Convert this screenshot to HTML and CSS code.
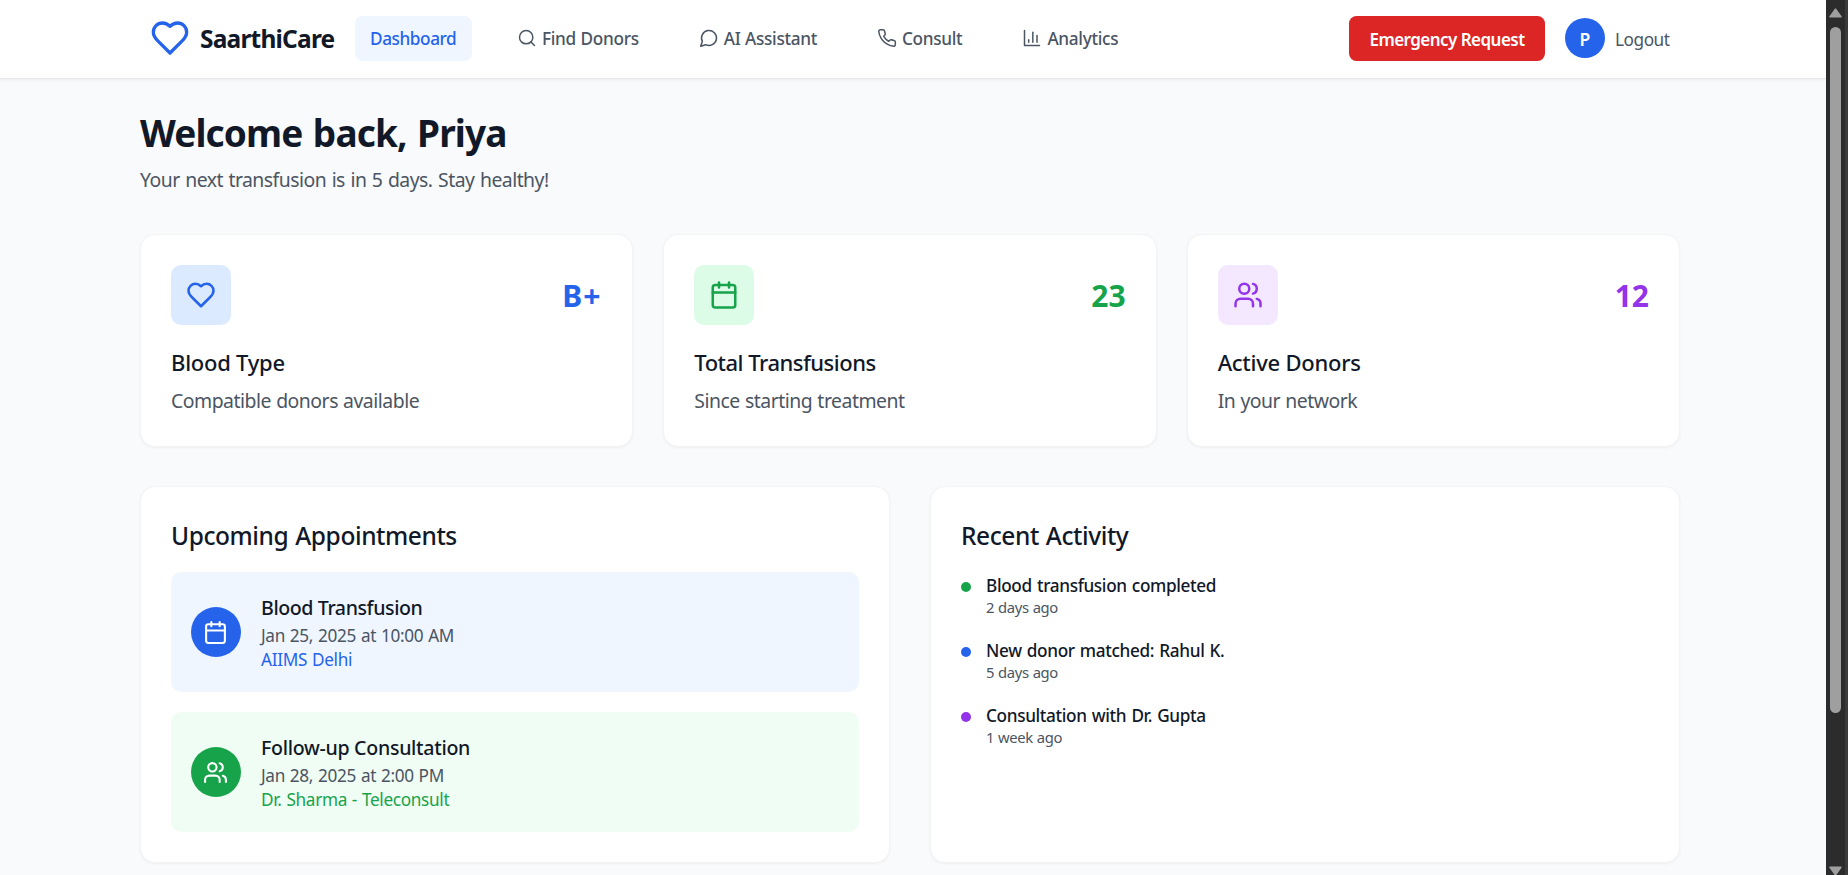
FILE: index.html
```
<!DOCTYPE html>
<html lang="en">
  <head>
    <meta charset="UTF-8" />
    <meta name="viewport" content="width=device-width, initial-scale=1.0" />
    <title>SaarthiCare | Dashboard</title>
    <link rel="stylesheet" href="styles.css" />
  </head>

  <body>
    <!-- shared icon shapes -->
    <svg class="icon-defs" aria-hidden="true">
      <symbol id="heart" viewBox="0 0 24 24">
        <path d="M19 14c1.49-1.46 3-3.21 3-5.5A5.5 5.5 0 0 0 16.5 3c-1.76 0-3 .5-4.5 2-1.5-1.5-2.74-2-4.5-2A5.5 5.5 0 0 0 2 8.5c0 2.3 1.5 4.05 3 5.5l7 7Z" />
      </symbol>
      <symbol id="search" viewBox="0 0 24 24">
        <circle cx="11" cy="11" r="8" />
        <path d="m21 21-4.3-4.3" />
      </symbol>
      <symbol id="message" viewBox="0 0 24 24">
        <path d="M7.9 20A9 9 0 1 0 4 16.1L2 22Z" />
      </symbol>
      <symbol id="phone" viewBox="0 0 24 24">
        <path d="M22 16.92v3a2 2 0 0 1-2.18 2 19.79 19.79 0 0 1-8.63-3.07 19.5 19.5 0 0 1-6-6 19.79 19.79 0 0 1-3.07-8.67A2 2 0 0 1 4.11 2h3a2 2 0 0 1 2 1.72 12.84 12.84 0 0 0 .7 2.81 2 2 0 0 1-.45 2.11L8.09 9.91a16 16 0 0 0 6 6l1.27-1.27a2 2 0 0 1 2.11-.45 12.84 12.84 0 0 0 2.81.7A2 2 0 0 1 22 16.92z" />
      </symbol>
      <symbol id="chart" viewBox="0 0 24 24">
        <path d="M3 3v18h18" />
        <path d="M18 17V9" />
        <path d="M13 17V5" />
        <path d="M8 17v-3" />
      </symbol>
      <symbol id="calendar" viewBox="0 0 24 24">
        <path d="M8 2v4" />
        <path d="M16 2v4" />
        <rect width="18" height="18" x="3" y="4" rx="2" />
        <path d="M3 10h18" />
      </symbol>
      <symbol id="users" viewBox="0 0 24 24">
        <path d="M16 21v-2a4 4 0 0 0-4-4H6a4 4 0 0 0-4 4v2" />
        <circle cx="9" cy="7" r="4" />
        <path d="M22 21v-2a4 4 0 0 0-3-3.87" />
        <path d="M16 3.13a4 4 0 0 1 0 7.75" />
      </symbol>
    </svg>

    <div class="page">
      <header class="header">
        <div class="header-inner">
          <div class="logo">
            <svg class="icon logo-icon"><use href="#heart" /></svg>
            <span>SaarthiCare</span>
          </div>
          <nav class="nav">
            <a class="nav-link active" href="#">Dashboard</a>
            <a class="nav-link" href="#"><svg class="icon"><use href="#search" /></svg><span>Find Donors</span></a>
            <a class="nav-link" href="#"><svg class="icon"><use href="#message" /></svg><span>AI Assistant</span></a>
            <a class="nav-link" href="#"><svg class="icon"><use href="#phone" /></svg><span>Consult</span></a>
            <a class="nav-link" href="#"><svg class="icon"><use href="#chart" /></svg><span>Analytics</span></a>
          </nav>
          <div class="header-actions">
            <button class="emergency" type="button">Emergency Request</button>
            <div class="user">
              <div class="avatar">P</div>
              <a class="logout" href="#">Logout</a>
            </div>
          </div>
        </div>
      </header>

      <main class="main">
        <h1>Welcome back, Priya</h1>
        <p class="subtitle">Your next transfusion is in 5 days. Stay healthy!</p>

        <section class="stats">
          <div class="card blue">
            <div class="stat-top">
              <div class="stat-icon"><svg class="icon"><use href="#heart" /></svg></div>
              <span class="stat-value">B+</span>
            </div>
            <h3>Blood Type</h3>
            <p>Compatible donors available</p>
          </div>
          <div class="card green">
            <div class="stat-top">
              <div class="stat-icon"><svg class="icon"><use href="#calendar" /></svg></div>
              <span class="stat-value">23</span>
            </div>
            <h3>Total Transfusions</h3>
            <p>Since starting treatment</p>
          </div>
          <div class="card purple">
            <div class="stat-top">
              <div class="stat-icon"><svg class="icon"><use href="#users" /></svg></div>
              <span class="stat-value">12</span>
            </div>
            <h3>Active Donors</h3>
            <p>In your network</p>
          </div>
        </section>

        <section class="panels">
          <div class="card">
            <h2>Upcoming Appointments</h2>
            <div class="appointments">
              <div class="appointment blue">
                <div class="appointment-icon"><svg class="icon"><use href="#calendar" /></svg></div>
                <div>
                  <h4>Blood Transfusion</h4>
                  <p class="date">Jan 25, 2025 at 10:00 AM</p>
                  <p class="place">AIIMS Delhi</p>
                </div>
              </div>
              <div class="appointment green">
                <div class="appointment-icon"><svg class="icon"><use href="#users" /></svg></div>
                <div>
                  <h4>Follow-up Consultation</h4>
                  <p class="date">Jan 28, 2025 at 2:00 PM</p>
                  <p class="place">Dr. Sharma - Teleconsult</p>
                </div>
              </div>
            </div>
          </div>
          <div class="card">
            <h2>Recent Activity</h2>
            <ul class="activity">
              <li class="green">
                <p class="event">Blood transfusion completed</p>
                <p class="time">2 days ago</p>
              </li>
              <li class="blue">
                <p class="event">New donor matched: Rahul K.</p>
                <p class="time">5 days ago</p>
              </li>
              <li class="purple">
                <p class="event">Consultation with Dr. Gupta</p>
                <p class="time">1 week ago</p>
              </li>
            </ul>
          </div>
        </section>
      </main>
    </div>

    <div class="scrollbar">
      <svg class="arrow" viewBox="0 0 12 9"><path d="M6 1 11 8H1Z" /></svg>
      <div class="thumb"></div>
      <svg class="arrow" viewBox="0 0 12 9"><path d="M1 1h10L6 8Z" /></svg>
    </div>
  </body>
</html>
```
FILE: styles.css
```
* {
  padding: 0;
  margin: 0;
  box-sizing: border-box;
}

html {
  font-size: 20px;
}

body {
  display: flex;
  height: 100vh;
  overflow: hidden;
  font-family: "Segoe UI", "Noto Sans", "Open Sans", sans-serif;
  line-height: 1.5;
  color: #111827;
  background-color: #f9fafb;
}

a {
  color: inherit;
  text-decoration: none;
}

.blue {
  --main: #2563eb;
  --soft: #dbeafe;
  --pale: #eff6ff;
}

.green {
  --main: #16a34a;
  --soft: #dcfce7;
  --pale: #f0fdf4;
}

.purple {
  --main: #9333ea;
  --soft: #f3e8ff;
}

.icon-defs {
  display: none;
}

.icon {
  display: block;
  flex-shrink: 0;
  width: 20px;
  height: 20px;
  fill: none;
  stroke: currentColor;
  stroke-width: 2;
  stroke-linecap: round;
  stroke-linejoin: round;
}

.page {
  flex: 1;
  min-width: 0;
}

/* header */

.header {
  height: 79px;
  padding-right: 6px;
  background-color: #ffffff;
  border-bottom: 1px solid #e5e7eb;
  box-shadow: 0 1px 3px rgba(0, 0, 0, 0.06);
}

.header-inner {
  display: flex;
  align-items: center;
  width: 1520px;
  height: 77px;
  margin: 0 auto;
}

.logo {
  display: flex;
  align-items: center;
  gap: 10px;
  width: 185px;
  margin-right: 20px;
  font-size: 24.5px;
  font-weight: 700;
  letter-spacing: -0.8px;
  white-space: nowrap;
}

.logo span {
  padding-top: 2px;
}

.logo-icon {
  width: 40px;
  height: 40px;
  margin-bottom: 1px;
  color: #2563eb;
}

.nav {
  display: flex;
  gap: 30px;
}

.nav-link {
  display: flex;
  align-items: center;
  gap: 5px;
  height: 45px;
  padding: 1px 15px 0;
  border-radius: 7.5px;
  font-size: 17.2px;
  font-weight: 500;
  letter-spacing: -0.31px;
  word-spacing: 0.5px;
  color: #4b5563;
}

.nav-link .icon {
  margin-bottom: 3px;
  stroke-width: 1.8;
}

.nav-link.active {
  width: 117px;
  color: #2563eb;
  background-color: #eff6ff;
  letter-spacing: -0.42px;
}

.header-actions {
  display: flex;
  align-items: center;
  gap: 20px;
  margin-left: auto;
}

.emergency {
  width: 196px;
  height: 45px;
  padding-top: 1px;
  border: none;
  border-radius: 7.5px;
  background-color: #dc2626;
  color: #ffffff;
  font-family: inherit;
  font-size: 17px;
  font-weight: 600;
  letter-spacing: -0.54px;
  cursor: pointer;
}

.user {
  display: flex;
  align-items: center;
  gap: 10px;
}

.avatar {
  display: flex;
  justify-content: center;
  align-items: center;
  width: 40px;
  height: 40px;
  margin-bottom: 1px;
  padding-top: 2px;
  border-radius: 50%;
  background-color: #2563eb;
  color: #ffffff;
  font-size: 17.5px;
  font-weight: 600;
}

.logout {
  width: 55px;
  padding-top: 2px;
  font-size: 17.2px;
  letter-spacing: -0.45px;
  color: #4b5563;
}

/* main */

.main {
  width: 1540px;
  margin-left: 140px;
  padding-top: 31px;
}

h1 {
  margin-bottom: 10px;
  font-size: 37px;
  font-weight: 700;
  line-height: 45px;
  letter-spacing: -0.85px;
  word-spacing: 1.5px;
}

.subtitle {
  margin-bottom: 39px;
  font-size: 19.4px;
  line-height: 30px;
  letter-spacing: -0.52px;
  word-spacing: 1px;
  color: #4b5563;
}

.card {
  padding: 30px;
  background-color: #ffffff;
  border: 1px solid #f3f4f6;
  border-radius: 15px;
  box-shadow: 0 1px 3px rgba(0, 0, 0, 0.05);
}

.stats {
  display: grid;
  grid-template-columns: repeat(3, 1fr);
  gap: 30px;
  height: 212px;
  margin-bottom: 40px;
}

.stat-top {
  display: flex;
  justify-content: space-between;
  align-items: center;
  margin-bottom: 20px;
}

.stat-icon {
  display: flex;
  justify-content: center;
  align-items: center;
  width: 60px;
  height: 60px;
  border-radius: 10px;
  color: var(--main);
  background-color: var(--soft);
}

.stat-icon .icon {
  width: 30px;
  height: 30px;
}

.stat-value {
  padding-top: 1px;
  font-size: 30px;
  font-weight: 700;
  color: var(--main);
}

.stats .blue .stat-value {
  padding-right: 1px;
  letter-spacing: 1px;
}

.stats h3 {
  margin-bottom: 6px;
  font-size: 22px;
  font-weight: 500;
  line-height: 35px;
  letter-spacing: -0.25px;
}

.stats .green h3 {
  letter-spacing: -0.5px;
}

.stats p {
  font-size: 19.4px;
  line-height: 30px;
  letter-spacing: -0.48px;
  word-spacing: 0.6px;
  color: #4b5563;
}

.panels {
  display: grid;
  grid-template-columns: repeat(2, 1fr);
  gap: 40px;
}

h2 {
  margin-bottom: 19px;
  padding-top: 1px;
  font-size: 24.5px;
  font-weight: 500;
  line-height: 35px;
  letter-spacing: -0.42px;
  word-spacing: 1px;
}

.appointments {
  display: flex;
  flex-direction: column;
  gap: 20px;
}

.appointment {
  display: flex;
  align-items: center;
  gap: 20px;
  height: 120px;
  padding: 20px;
  border-radius: 10px;
  background-color: var(--pale);
}

.appointment-icon {
  display: flex;
  justify-content: center;
  align-items: center;
  width: 50px;
  height: 50px;
  padding-right: 1px;
  border-radius: 50%;
  color: #ffffff;
  background-color: var(--main);
}

.appointment-icon .icon {
  width: 25px;
  height: 25px;
}

.appointment h4 {
  font-size: 19.6px;
  font-weight: 500;
  line-height: 31px;
  letter-spacing: -0.3px;
}

.appointment.blue h4 {
  letter-spacing: -0.42px;
}

.date,
.place {
  font-size: 17.2px;
  line-height: 25px;
  letter-spacing: -0.32px;
  word-spacing: 0.7px;
  color: #4b5563;
}

.place {
  line-height: 24px;
  color: var(--main);
}

.activity {
  display: flex;
  flex-direction: column;
  gap: 20px;
  list-style: none;
}

.activity li {
  display: grid;
  grid-template-columns: 10px 1fr;
  column-gap: 15px;
}

.activity li::before {
  content: "";
  grid-row: span 2;
  width: 10px;
  height: 10px;
  margin-top: 10px;
  border-radius: 50%;
  background-color: var(--main);
}

.event {
  padding-top: 1px;
  font-size: 17.2px;
  font-weight: 500;
  line-height: 25px;
  letter-spacing: -0.35px;
  word-spacing: 1px;
}

.time {
  font-size: 14.8px;
  line-height: 19px;
  letter-spacing: -0.36px;
  word-spacing: 0.5px;
  color: #4b5563;
}

/* scrollbar */

.scrollbar {
  display: flex;
  flex-direction: column;
  align-items: center;
  width: 22px;
  padding: 8px 0 0;
  border-right: 3px solid #3a3a3a;
  background-color: #2c2c2c;
}

.arrow {
  flex-shrink: 0;
  width: 13px;
  height: 10px;
  fill: #9f9f9f;
  stroke: #9f9f9f;
  stroke-width: 1.5;
  stroke-linejoin: round;
}

.thumb {
  flex-shrink: 0;
  width: 11px;
  height: 686px;
  margin: 9px 0 153px;
  border-radius: 6px;
  background-color: #9f9f9f;
}
```
